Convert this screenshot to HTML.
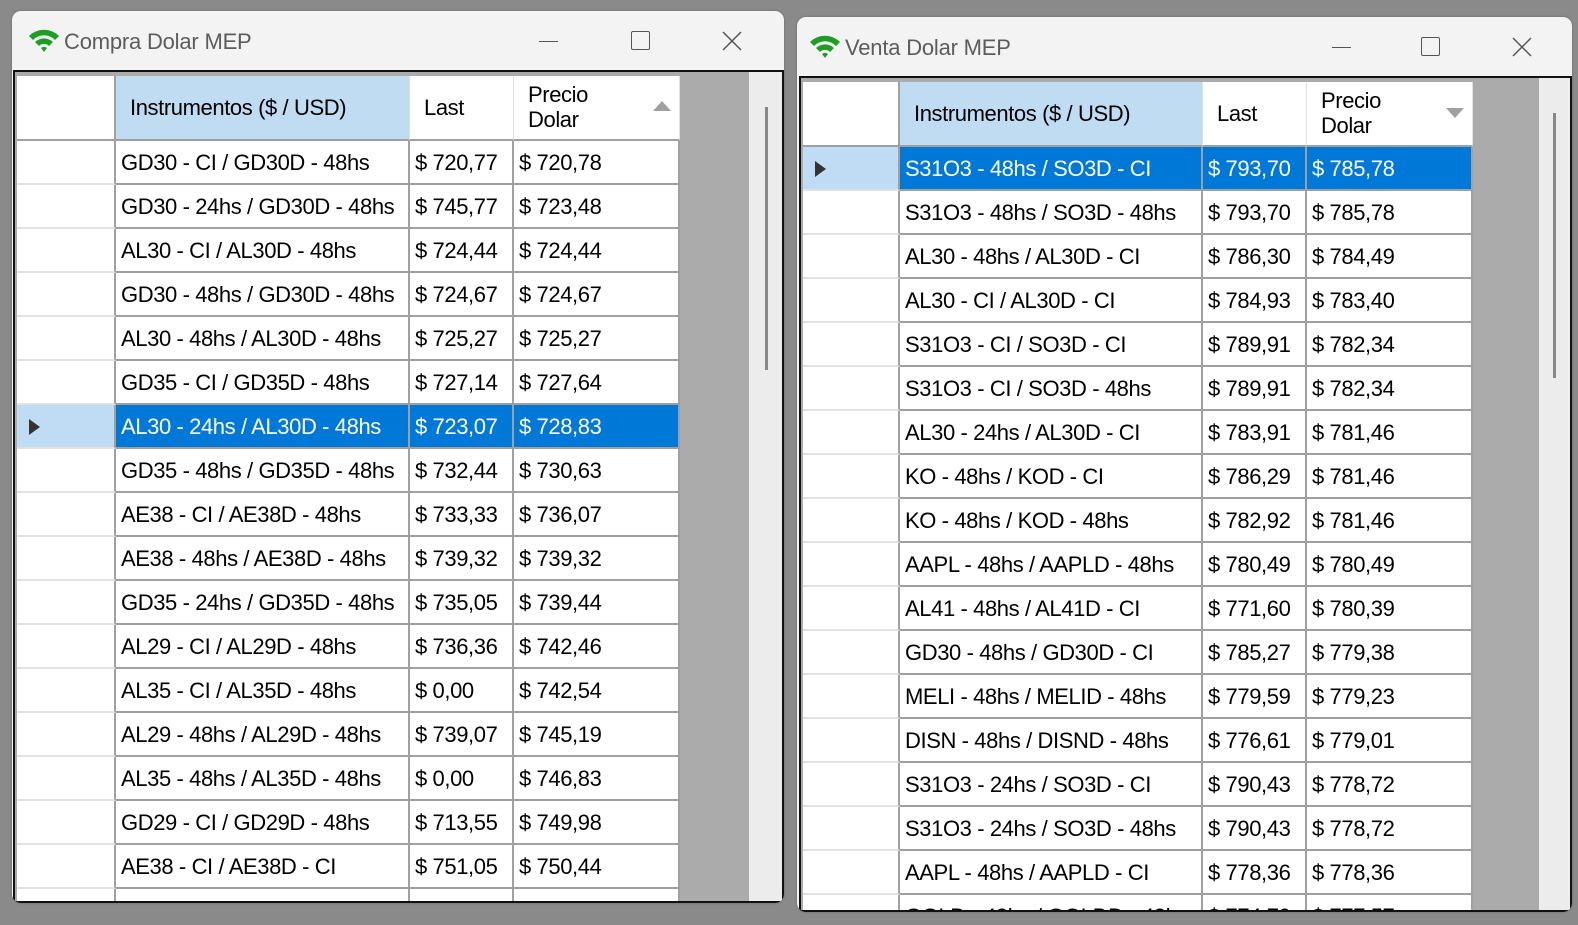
<!DOCTYPE html>
<html><head><meta charset="utf-8"><style>
*{box-sizing:border-box;margin:0;padding:0}
body{width:1578px;height:925px;background:#8a8a8a;position:relative;overflow:hidden;font-family:"Liberation Sans",Arial,sans-serif}
.win{position:absolute;background:#f3f3f3;border-radius:9px;overflow:hidden;box-shadow:0 0 2px #666}
.title{position:absolute;left:52px;font-size:22px;color:#5c5c5c;letter-spacing:-0.2px}
.client{position:absolute;background:#ababab;border:2px solid #111;overflow:hidden}
.grid{position:absolute;left:2px;top:4px;display:grid}
.c{height:44px;border-bottom:2px solid #a0a0a0;border-right:2px solid #a0a0a0;background:#fff;font-size:22px;line-height:44px;padding-left:5px;white-space:nowrap;overflow:hidden;letter-spacing:-0.4px;color:#000}
.rh{height:44px;border-bottom:2px solid #e2e2e2;border-right:2px solid #a0a0a0;background:#fff;position:relative}
.rh.s{background:#bfdcf4}
.rh.s::after{content:"";position:absolute;left:12px;top:14px;border-left:11px solid #333;border-top:8px solid transparent;border-bottom:8px solid transparent}
.c.s{background:#0078d7;color:#fff}
.h{height:65px;background:#fff;border-bottom:2px solid #a0a0a0;border-right:1px solid #e0e0e0;font-size:22px;letter-spacing:-0.4px;padding-left:14px;position:relative}
.h1{background:#bfdcf3}
.sb{position:absolute;background:#ececec;top:0;bottom:0}
.thumb{position:absolute;width:3px;background:#888}
.ctrl{position:absolute;border-color:#555}
</style></head><body>

<div class="win" style="left:12px;top:11px;width:772px;height:892px">
  <svg style="position:absolute;left:15px;top:16px" width="34" height="28" viewBox="0 0 34 28"><path d="M2 9 A21 21 0 0 1 32 9 L28 13 A15 15 0 0 0 6 13Z M8 15 A13 13 0 0 1 26 15 L22 19 A7 7 0 0 0 12 19Z M14 21 A5 5 0 0 1 20 21 L17 25Z" fill="#1f9e25"/></svg>
  <div class="title" style="top:18px">Compra Dolar MEP</div>
  <div class="ctrl" style="left:527px;top:30px;width:19px;border-top:1.5px solid #555"></div>
  <div class="ctrl" style="left:619px;top:20px;width:19px;height:19px;border:1.5px solid #555;border-radius:2px"></div>
  <svg style="position:absolute;left:710px;top:20px" width="20" height="20"><path d="M1 1L19 19M19 1L1 19" stroke="#555" stroke-width="1.5"/></svg>
  <div class="client" style="left:1px;top:59px;width:771px;height:833px">
    <div class="sb" style="left:734px;width:35px"><div class="thumb" style="left:16px;top:35px;height:263px"></div></div>
    <div class="grid" style="grid-template-columns:99px 294px 104px 166px">
      <div class="h" style="border-right:2px solid #a0a0a0"></div>
      <div class="h h1" style="line-height:63px">Instrumentos ($ / USD)</div>
      <div class="h" style="line-height:63px;padding-left:14px">Last</div>
      <div class="h" style="line-height:25px;padding-top:6px;padding-left:14px">Precio<br>Dolar<svg style="position:absolute;right:8px;top:25px" width="18" height="10"><path d="M9 0L18 10H0Z" fill="#a0a0a0"/></svg></div>
      <div class="rh"></div><div class="c">GD30 - CI / GD30D - 48hs</div><div class="c">$ 720,77</div><div class="c">$ 720,78</div>
      <div class="rh"></div><div class="c">GD30 - 24hs / GD30D - 48hs</div><div class="c">$ 745,77</div><div class="c">$ 723,48</div>
      <div class="rh"></div><div class="c">AL30 - CI / AL30D - 48hs</div><div class="c">$ 724,44</div><div class="c">$ 724,44</div>
      <div class="rh"></div><div class="c">GD30 - 48hs / GD30D - 48hs</div><div class="c">$ 724,67</div><div class="c">$ 724,67</div>
      <div class="rh"></div><div class="c">AL30 - 48hs / AL30D - 48hs</div><div class="c">$ 725,27</div><div class="c">$ 725,27</div>
      <div class="rh"></div><div class="c">GD35 - CI / GD35D - 48hs</div><div class="c">$ 727,14</div><div class="c">$ 727,64</div>
      <div class="rh s"></div><div class="c s">AL30 - 24hs / AL30D - 48hs</div><div class="c s">$ 723,07</div><div class="c s">$ 728,83</div>
      <div class="rh"></div><div class="c">GD35 - 48hs / GD35D - 48hs</div><div class="c">$ 732,44</div><div class="c">$ 730,63</div>
      <div class="rh"></div><div class="c">AE38 - CI / AE38D - 48hs</div><div class="c">$ 733,33</div><div class="c">$ 736,07</div>
      <div class="rh"></div><div class="c">AE38 - 48hs / AE38D - 48hs</div><div class="c">$ 739,32</div><div class="c">$ 739,32</div>
      <div class="rh"></div><div class="c">GD35 - 24hs / GD35D - 48hs</div><div class="c">$ 735,05</div><div class="c">$ 739,44</div>
      <div class="rh"></div><div class="c">AL29 - CI / AL29D - 48hs</div><div class="c">$ 736,36</div><div class="c">$ 742,46</div>
      <div class="rh"></div><div class="c">AL35 - CI / AL35D - 48hs</div><div class="c">$ 0,00</div><div class="c">$ 742,54</div>
      <div class="rh"></div><div class="c">AL29 - 48hs / AL29D - 48hs</div><div class="c">$ 739,07</div><div class="c">$ 745,19</div>
      <div class="rh"></div><div class="c">AL35 - 48hs / AL35D - 48hs</div><div class="c">$ 0,00</div><div class="c">$ 746,83</div>
      <div class="rh"></div><div class="c">GD29 - CI / GD29D - 48hs</div><div class="c">$ 713,55</div><div class="c">$ 749,98</div>
      <div class="rh"></div><div class="c">AE38 - CI / AE38D - CI</div><div class="c">$ 751,05</div><div class="c">$ 750,44</div>
      <div class="rh"></div><div class="c">GD38 - 48hs / GD38D - 48hs</div><div class="c">$ 757,31</div><div class="c">$ 751,24</div>
    </div>
  </div>
</div>

<div class="win" style="left:797px;top:17px;width:775px;height:895px">
  <svg style="position:absolute;left:11px;top:16px" width="34" height="28" viewBox="0 0 34 28"><path d="M2 9 A21 21 0 0 1 32 9 L28 13 A15 15 0 0 0 6 13Z M8 15 A13 13 0 0 1 26 15 L22 19 A7 7 0 0 0 12 19Z M14 21 A5 5 0 0 1 20 21 L17 25Z" fill="#1f9e25"/></svg>
  <div class="title" style="left:48px;top:18px">Venta Dolar MEP</div>
  <div class="ctrl" style="left:535px;top:30px;width:19px;border-top:1.5px solid #555"></div>
  <div class="ctrl" style="left:624px;top:20px;width:19px;height:19px;border:1.5px solid #555;border-radius:2px"></div>
  <svg style="position:absolute;left:715px;top:20px" width="20" height="20"><path d="M1 1L19 19M19 1L1 19" stroke="#555" stroke-width="1.5"/></svg>
  <div class="client" style="left:2px;top:59px;width:773px;height:836px">
    <div class="sb" style="left:738px;width:33px"><div class="thumb" style="left:14px;top:35px;height:265px"></div></div>
    <div class="grid" style="grid-template-columns:97px 303px 104px 166px">
      <div class="h" style="border-right:2px solid #a0a0a0"></div>
      <div class="h h1" style="line-height:63px">Instrumentos ($ / USD)</div>
      <div class="h" style="line-height:63px">Last</div>
      <div class="h" style="line-height:25px;padding-top:6px">Precio<br>Dolar<svg style="position:absolute;right:8px;top:26px" width="18" height="10"><path d="M0 0H18L9 10Z" fill="#a0a0a0"/></svg></div>
      <div class="rh s"></div><div class="c s">S31O3 - 48hs / SO3D - CI</div><div class="c s">$ 793,70</div><div class="c s">$ 785,78</div>
      <div class="rh"></div><div class="c">S31O3 - 48hs / SO3D - 48hs</div><div class="c">$ 793,70</div><div class="c">$ 785,78</div>
      <div class="rh"></div><div class="c">AL30 - 48hs / AL30D - CI</div><div class="c">$ 786,30</div><div class="c">$ 784,49</div>
      <div class="rh"></div><div class="c">AL30 - CI / AL30D - CI</div><div class="c">$ 784,93</div><div class="c">$ 783,40</div>
      <div class="rh"></div><div class="c">S31O3 - CI / SO3D - CI</div><div class="c">$ 789,91</div><div class="c">$ 782,34</div>
      <div class="rh"></div><div class="c">S31O3 - CI / SO3D - 48hs</div><div class="c">$ 789,91</div><div class="c">$ 782,34</div>
      <div class="rh"></div><div class="c">AL30 - 24hs / AL30D - CI</div><div class="c">$ 783,91</div><div class="c">$ 781,46</div>
      <div class="rh"></div><div class="c">KO - 48hs / KOD - CI</div><div class="c">$ 786,29</div><div class="c">$ 781,46</div>
      <div class="rh"></div><div class="c">KO - 48hs / KOD - 48hs</div><div class="c">$ 782,92</div><div class="c">$ 781,46</div>
      <div class="rh"></div><div class="c">AAPL - 48hs / AAPLD - 48hs</div><div class="c">$ 780,49</div><div class="c">$ 780,49</div>
      <div class="rh"></div><div class="c">AL41 - 48hs / AL41D - CI</div><div class="c">$ 771,60</div><div class="c">$ 780,39</div>
      <div class="rh"></div><div class="c">GD30 - 48hs / GD30D - CI</div><div class="c">$ 785,27</div><div class="c">$ 779,38</div>
      <div class="rh"></div><div class="c">MELI - 48hs / MELID - 48hs</div><div class="c">$ 779,59</div><div class="c">$ 779,23</div>
      <div class="rh"></div><div class="c">DISN - 48hs / DISND - 48hs</div><div class="c">$ 776,61</div><div class="c">$ 779,01</div>
      <div class="rh"></div><div class="c">S31O3 - 24hs / SO3D - CI</div><div class="c">$ 790,43</div><div class="c">$ 778,72</div>
      <div class="rh"></div><div class="c">S31O3 - 24hs / SO3D - 48hs</div><div class="c">$ 790,43</div><div class="c">$ 778,72</div>
      <div class="rh"></div><div class="c">AAPL - 48hs / AAPLD - CI</div><div class="c">$ 778,36</div><div class="c">$ 778,36</div>
      <div class="rh"></div><div class="c">GOLD - 48hs / GOLDD - 48hs</div><div class="c">$ 774,70</div><div class="c">$ 777,57</div>
    </div>
  </div>
</div>
</body></html>
